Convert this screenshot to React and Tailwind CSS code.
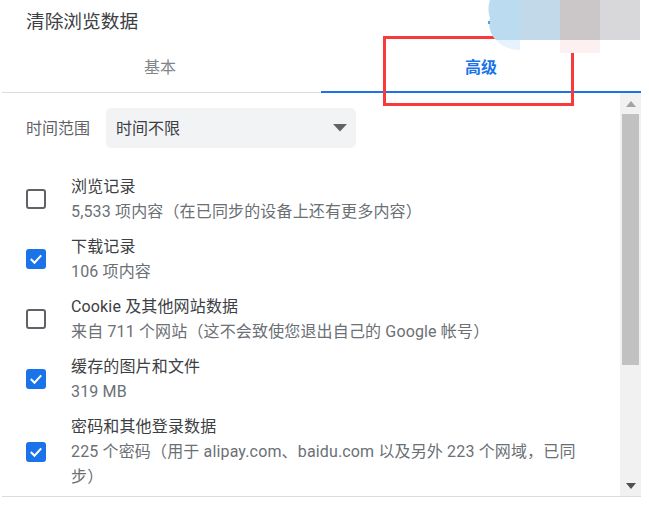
import React from 'react';

const rows = [
    { label: '浏览记录', sub: ['5,533 项内容（在已同步的设备上还有更多内容）'], checked: false },
    { label: '下载记录', sub: ['106 项内容'], checked: true },
    { label: 'Cookie 及其他网站数据', sub: ['来自 711 个网站（这不会致使您退出自己的 Google 帐号）'], checked: false },
    { label: '缓存的图片和文件', sub: ['319 MB'], checked: true },
    { label: '密码和其他登录数据', sub: ['225 个密码（用于 alipay.com、baidu.com 以及另外 223 个网域，已同', '步）'], checked: true },
];

const Checkbox = ({ checked }) => (
    checked ? (
        <div className="w-5 h-5 rounded-[3px] bg-[#1a73e8] flex items-center justify-center flex-shrink-0">
            <svg width="14" height="14" viewBox="0 0 14 14" fill="none">
                <path d="M1.8 7 L5.5 10.7 L12.2 3.4" stroke="white" strokeWidth="2" />
            </svg>
        </div>
    ) : (
        <div className="w-5 h-5 rounded-[3px] border-2 border-[#5f6368] flex-shrink-0" />
    )
);

const App = () => {
    return (
        <div className="relative w-[649px] h-[505px] bg-white overflow-hidden font-['Roboto','Noto_Sans_CJK_SC',sans-serif]">
            <div className="w-[641px] h-[497px] flex flex-col">
                {/* Header */}
                <div className="h-[44px] pl-[26px] flex items-center text-[18.7px] text-[#3c4043]">清除浏览数据</div>

                {/* Tabs */}
                <div className="h-[49px] ml-[2px] flex border-b border-[#dadce0] flex-shrink-0">
                    <div className="w-[319px] flex items-center justify-center text-[16px] text-[#80868b] pr-[3px]">基本</div>
                    <div className="flex-1 flex items-center justify-center text-[16px] font-semibold text-[#1a73e8] border-b-2 border-[#1a73e8] -mb-px">高级</div>
                </div>

                {/* Body */}
                <div className="flex-1 ml-[2px] flex min-h-0 border-b border-[#dadce0]">
                    <div className="flex-1 pl-[24px] pt-[15px] min-w-0">
                        <div className="flex items-center gap-[16px] mb-[21px]">
                            <span className="text-[16px] text-[#5f6368] pt-[1px]">时间范围</span>
                            <div className="w-[250px] h-[40px] bg-[#f1f3f4] rounded-[5px] pl-[10px] pr-[9px] flex items-center justify-between text-[16px] text-[#3c4043]">
                                <span className="pt-[1px]">时间不限</span>
                                <svg width="14" height="8" viewBox="0 0 14 8"><path d="M0 0 H14 L7 7.5 Z" fill="#5f6368" /></svg>
                            </div>
                        </div>

                        {rows.map((row) => (
                            <div key={row.label} className="flex items-center py-[5px] pr-[20px]">
                                <Checkbox checked={row.checked} />
                                <div className="ml-[25px]">
                                    <div className="text-[16px] leading-[25px] tracking-[0.15px] text-[#3c4043]">{row.label}</div>
                                    {row.sub.map((line) => (
                                        <div key={line} className="text-[16px] leading-[25px] tracking-[0.15px] text-[#6b7075] whitespace-nowrap">{line}</div>
                                    ))}
                                </div>
                            </div>
                        ))}
                    </div>

                    {/* Scrollbar */}
                    <div className="w-[21px] bg-[#f1f1f1] flex flex-col items-center flex-shrink-0">
                        <div className="h-[21px] flex items-center justify-center flex-shrink-0">
                            <svg width="10" height="6" viewBox="0 0 10 6"><path d="M5 0 L10 6 H0 Z" fill="#a3a3a3" /></svg>
                        </div>
                        <div className="w-[17px] h-[251px] bg-[#c1c1c1]" />
                        <div className="mt-auto h-[21px] flex items-center justify-center">
                            <svg width="10" height="6" viewBox="0 0 10 6"><path d="M0 0 H10 L5 6 Z" fill="#505050" /></svg>
                        </div>
                    </div>
                </div>
            </div>

            {/* Red annotation box */}
            <div className="absolute left-[383px] top-[36px] w-[191px] h-[70px] border-[3px] border-[#f93a3a]" />

            {/* Mosaic over the corner */}
            <svg className="absolute left-[485px] top-0" width="155" height="54" viewBox="0 0 155 54">
                <path d="M5 0 H35 V50 C25 50 16 46 11 40 C6 34 3 28 5 18 C3 12 3 6 5 0 Z" fill="#e8f2fc" />
                <path d="M5 0 H35 V40 H11 C6 34 3 28 5 18 C3 12 3 6 5 0 Z" fill="#bbdcf0" />
                <rect x="35" y="0" width="40" height="40" fill="#c1d9e9" />
                <rect x="75" y="0" width="40" height="40" fill="#cbc7c9" />
                <rect x="75" y="40" width="40" height="13" fill="#fdf0f0" />
                <rect x="115" y="0" width="40" height="40" fill="#d8d8da" />
                <rect x="3" y="21" width="2" height="3" fill="#4aa8e0" />
            </svg>
        </div>
    );
};

export default App;
